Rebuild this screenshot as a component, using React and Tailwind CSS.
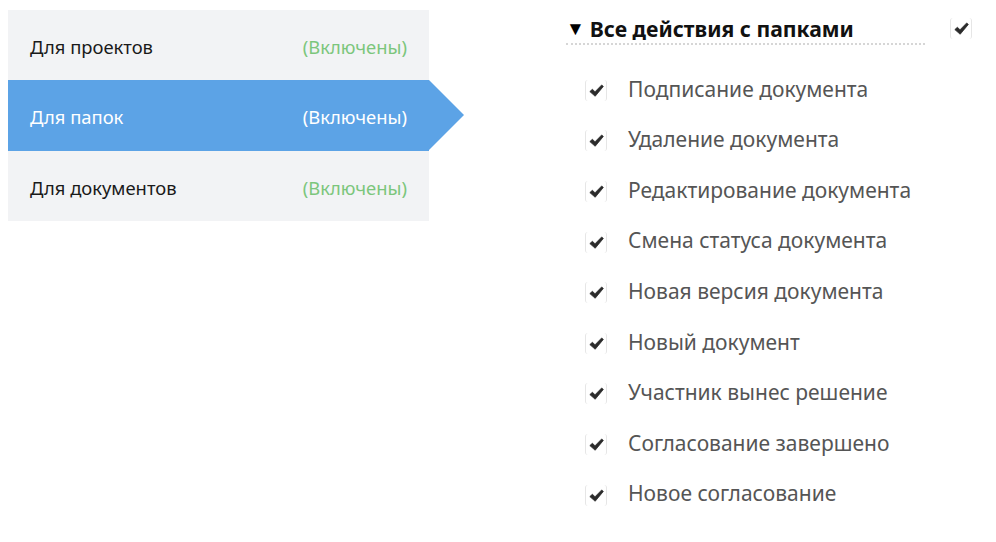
import React from "react";

const rows = [
  { label: "Для проектов", active: false },
  { label: "Для папок", active: true },
  { label: "Для документов", active: false },
];

const items = [
  "Подписание документа",
  "Удаление документа",
  "Редактирование документа",
  "Смена статуса документа",
  "Новая версия документа",
  "Новый документ",
  "Участник вынес решение",
  "Согласование завершено",
  "Новое согласование",
];

function Check() {
  return (
    <div className="w-[22px] h-[21px] border-x border-[#e6e6e6] rounded-[3px] flex items-center justify-center">
      <svg width="15" height="13" viewBox="0 0 16 14">
        <path d="M0.8 8.2 L3.6 5.6 L6.4 8.4 L13.6 1 L15.4 2.6 L6.6 13.2 Z" fill="#2b2b2b" strokeLinejoin="round" stroke="#2b2b2b" strokeWidth="0.8" />
      </svg>
    </div>
  );
}

export default function App() {
  return (
    <div className="w-[996px] h-[542px] bg-white flex" style={{ fontFamily: '"Noto Sans", "Open Sans", sans-serif' }}>
      <div className="ml-[8px] mt-[10px] w-[421px] flex flex-col self-start">
        {rows.map((r) =>
          r.active ? (
            <div key={r.label} className="relative h-[71px] bg-[#5ca3e6] flex items-center justify-between pl-[22px] pr-[22px] pt-[3px] text-white text-[18.4px]">
              <span>{r.label}</span>
              <span>(Включены)</span>
              <div className="absolute left-full top-0 w-0 h-0 border-y-[35.5px] border-y-transparent border-l-[35px] border-l-[#5ca3e6]" />
            </div>
          ) : (
            <div key={r.label} className="h-[70px] bg-[#f2f3f5] flex items-center justify-between pl-[22px] pr-[22px] pt-[3px] text-[18.4px]">
              <span className="text-[#1a1a1a]">{r.label}</span>
              <span className="text-[#7cc67c]">(Включены)</span>
            </div>
          )
        )}
      </div>
      <div className="ml-[137px] mt-[14px] flex flex-col">
        <div className="flex items-start">
          <div className="w-[359px] border-b-2 border-dotted border-[#d6d6d6] h-[31px] flex items-center">
            <span className="text-[19px] leading-none text-black mr-[5px]">▼</span>
            <span className="text-[21.2px] font-bold text-[#111]">Все действия с папками</span>
          </div>
          <div className="ml-[25px] mt-[4px]">
            <Check />
          </div>
        </div>
        <div className="mt-[19px] flex flex-col">
          {items.map((t) => (
            <div key={t} className="h-[50.6px] flex items-center">
              <div className="ml-[19px] mt-[2px]">
                <Check />
              </div>
              <span className="ml-[21px] text-[21px] text-[#555]">{t}</span>
            </div>
          ))}
        </div>
      </div>
    </div>
  );
}
